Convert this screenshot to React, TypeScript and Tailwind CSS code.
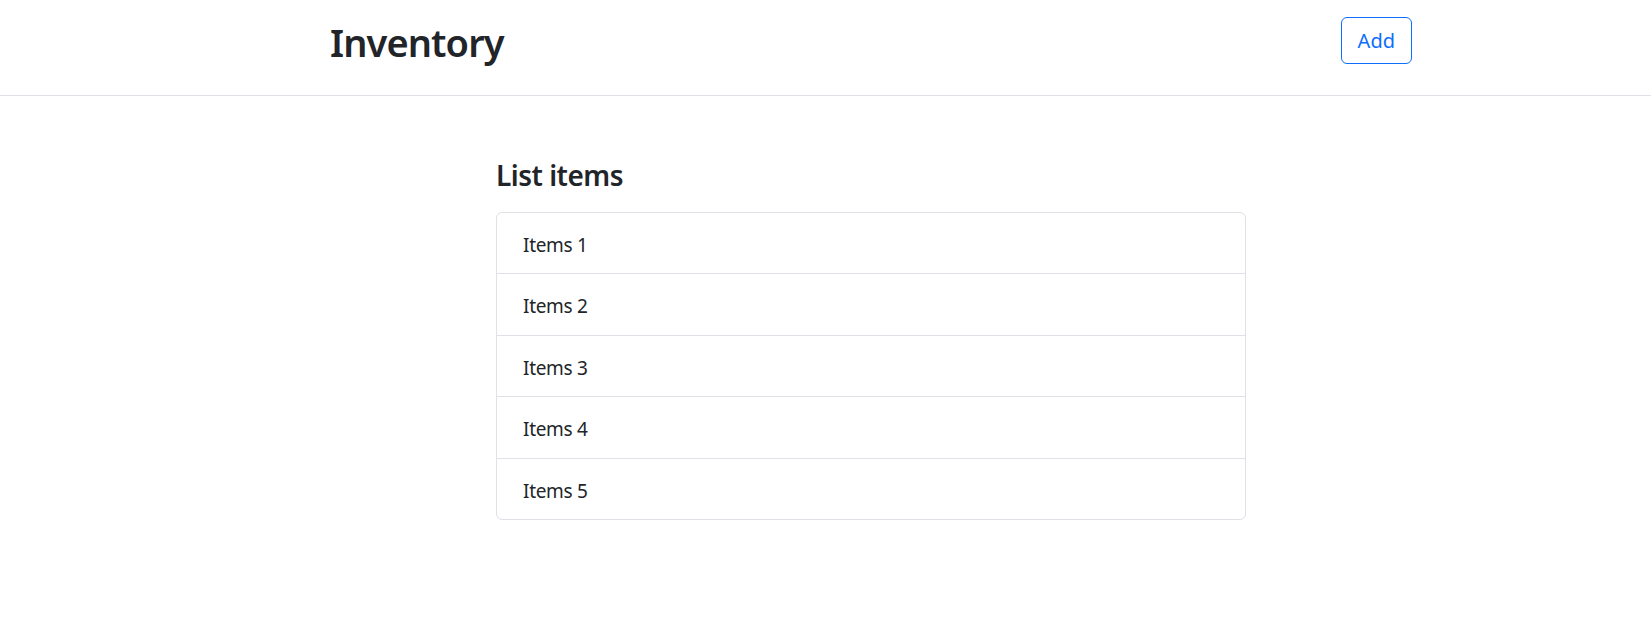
const items = ["Items 1", "Items 2", "Items 3", "Items 4", "Items 5"];

const Header = () => {
  return (
    <header className="h-[96px] border-b border-[#dee2e6]">
      <div className="ml-[330px] w-[1082px] flex items-start justify-between">
        <h1 className="mt-[18px] text-[38px] leading-[48px] font-semibold tracking-[-0.9px] text-[#212529]">Inventory</h1>
        <button className="mt-[17px] h-[47px] px-[16px] rounded-[6px] border border-[#0d6efd] text-[#0d6efd] text-[20px] leading-[30px]">
          Add
        </button>
      </div>
    </header>
  );
};

const ItemList = () => {
  return (
    <section className="ml-[496px] w-[750px] pt-[62px]">
      <h3 className="text-[28px] leading-[34px] font-semibold tracking-[-0.5px] text-[#212529] mb-[20px]">List items</h3>
      <ul className="border border-[#dee2e6] rounded-[6px]">
        {items.map((item, i) => (
          <li
            key={item}
            className={
              i === 0
                ? "px-[26px] pt-[17px] pb-[13px] text-[19px] leading-[30.4px] tracking-[-0.3px] text-[#212529]"
                : "px-[26px] pt-[17px] pb-[13px] text-[19px] leading-[30.4px] tracking-[-0.3px] text-[#212529] border-t border-[#dee2e6]"
            }
          >
            {item}
          </li>
        ))}
      </ul>
    </section>
  );
};

export default function App() {
  return (
    <div className="min-h-[643px] bg-white font-['Segoe_UI','Noto_Sans',sans-serif]">
      <Header />
      <ItemList />
    </div>
  );
}
